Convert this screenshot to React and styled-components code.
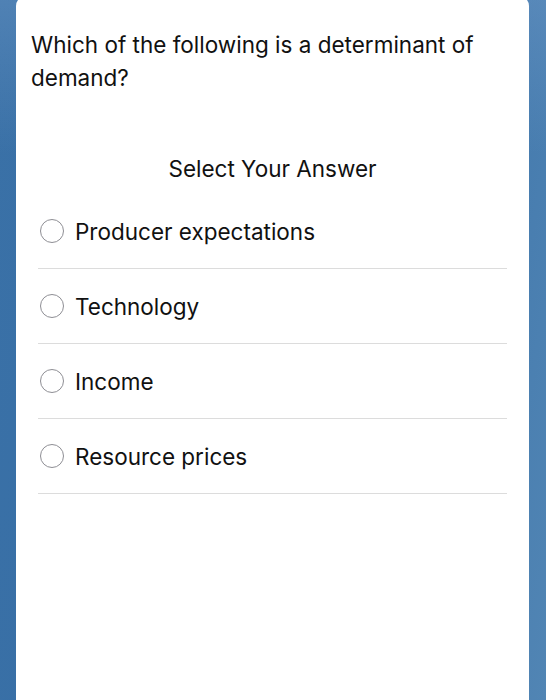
import React from 'react'
import styled, { createGlobalStyle } from 'styled-components'

const colors = {
    INK: '#111111',
    LINE: '#dcdcdc',
    RADIO: '#8e8e94'
}

const GlobalStyle = createGlobalStyle`
    html, body {
        margin: 0;
        padding: 0;
    }
    body {
        height: 700px;
        overflow: hidden;
        font-family: Inter, "Liberation Sans", sans-serif;
        background: linear-gradient(100deg, #3a71a7 0%, #376ea5 40%, #4379ad 75%, #5185b4 100%);
    }
`

const Screen = styled.div`
    height: 700px;
    display: flex;
    padding: 0 17px 0 16px;
    background: linear-gradient(180deg, rgba(120, 160, 205, 0.35) 0%, rgba(120, 160, 205, 0) 22%);
`

const Card = styled.div`
    flex: 1;
    margin-top: -4px;
    height: 720px;
    background: #ffffff;
    border-radius: 10px 10px 0 0;
    padding: 32px 0 0;
    box-sizing: border-box;
    color: ${colors.INK};
`

const Question = styled.p`
    margin: 0;
    padding: 0 15px;
    font-size: 22.5px;
    line-height: 33px;
`

const Prompt = styled.h2`
    margin: 58px 0 0;
    font-size: 22.5px;
    font-weight: 400;
    line-height: 33px;
    text-align: center;
`

const Options = styled.div`
    margin: 9px 22px 0;
`

const Option = styled.label`
    display: flex;
    align-items: center;
    gap: 11px;
    height: 74px;
    padding-left: 2px;
    border-bottom: 1px solid ${colors.LINE};
    font-size: 22.5px;
    cursor: pointer;
`

const Radio = styled.span`
    width: 24px;
    height: 24px;
    box-sizing: border-box;
    border-radius: 50%;
    border: 1.5px solid ${colors.RADIO};
    flex-shrink: 0;
`

const answers = ['Producer expectations', 'Technology', 'Income', 'Resource prices']

const App = () => (
    <>
        <GlobalStyle />
        <Screen>
            <Card>
                <Question>Which of the following is a determinant of demand?</Question>
                <Prompt>Select Your Answer</Prompt>
                <Options>
                    {answers.map(a => (
                        <Option key={a}>
                            <Radio />
                            {a}
                        </Option>
                    ))}
                </Options>
            </Card>
        </Screen>
    </>
)

export default App
